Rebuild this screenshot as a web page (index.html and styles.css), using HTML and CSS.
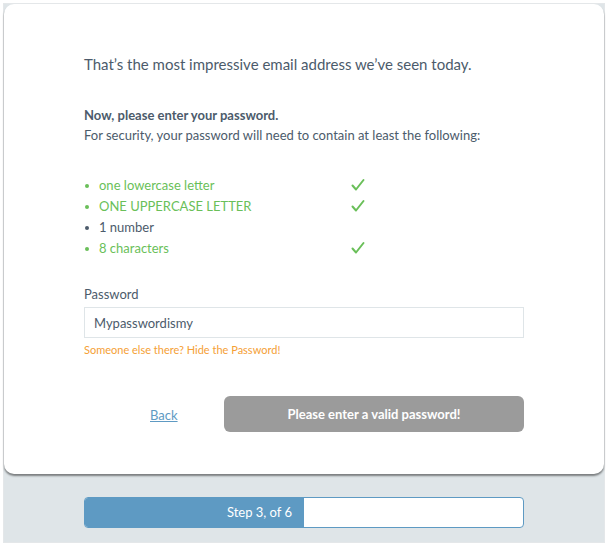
FILE: index.html
```html
<!DOCTYPE html>
<html lang="en">
<head>
<meta charset="utf-8">
<title>Password</title>
<link rel="stylesheet" href="styles.css">
</head>
<body>
<div class="frame">
  <div class="card">
    <h1 class="title">That’s the most impressive email address we’ve seen today.</h1>
    <p class="intro"><strong>Now, please enter your password.</strong><br>For security, your password will need to contain at least the following:</p>
    <ul class="rules">
      <li class="rule ok"><span class="rule-text">one lowercase letter</span><svg class="check" viewBox="0 0 14 14" width="14" height="14"><path d="M1.5 7.5 L5 11.5 L12.5 2" fill="none" stroke="#6abf59" stroke-width="2" stroke-linecap="round" stroke-linejoin="round"/></svg></li>
      <li class="rule ok"><span class="rule-text">ONE UPPERCASE LETTER</span><svg class="check" viewBox="0 0 14 14" width="14" height="14"><path d="M1.5 7.5 L5 11.5 L12.5 2" fill="none" stroke="#6abf59" stroke-width="2" stroke-linecap="round" stroke-linejoin="round"/></svg></li>
      <li class="rule"><span class="rule-text">1 number</span></li>
      <li class="rule ok"><span class="rule-text">8 characters</span><svg class="check" viewBox="0 0 14 14" width="14" height="14"><path d="M1.5 7.5 L5 11.5 L12.5 2" fill="none" stroke="#6abf59" stroke-width="2" stroke-linecap="round" stroke-linejoin="round"/></svg></li>
    </ul>
    <label class="label" for="pw">Password</label>
    <input class="input" id="pw" type="text" value="Mypasswordismy">
    <p class="hint">Someone else there? Hide the Password!</p>
    <div class="actions">
      <a class="back" href="#">Back</a>
      <button class="submit" type="button">Please enter a valid password!</button>
    </div>
  </div>
  <div class="footer">
    <div class="progress">
      <div class="progress-fill" style="width:50%">Step 3, of 6</div>
    </div>
  </div>
</div>
</body>
</html>
```
FILE: styles.css
```css
html, body {
  margin: 0;
  padding: 0;
  background: #ffffff;
}
body {
  font-family: Lato, "Open Sans", Arial, sans-serif;
  color: #4c5b6b;
}
.frame {
  margin: 3px;
  width: 600px;
  border: 1px solid #e4e7e9;
  background: #dfe5e8;
}
.card {
  background: #ffffff;
  border-radius: 10px;
  box-shadow: 0 2px 2px rgba(0, 0, 0, 0.45);
  padding: 50px 80px 42px 80px;
}
.title {
  margin: 0;
  font-size: 15px;
  line-height: 20px;
  font-weight: 400;
  color: #4c5b6b;
}
.intro {
  margin: 31px 0 0 0;
  font-size: 13px;
  line-height: 20px;
}
.intro strong {
  font-weight: 700;
}
.rules {
  list-style: none;
  margin: 30px 0 0 0;
  padding: 0;
}
.rule {
  display: flex;
  align-items: center;
  font-size: 13px;
  line-height: 21px;
  height: 21px;
}
.rule::before {
  content: "";
  width: 4px;
  height: 4px;
  border-radius: 50%;
  background: #4c5b6b;
  margin: 0 10px 0 1px;
  flex: none;
}
.rule.ok {
  color: #6abf59;
}
.rule.ok::before {
  background: #6abf59;
}
.rule-text {
  width: 252px;
}
.check {
  display: block;
  margin-top: -1px;
}
.label {
  display: block;
  margin-top: 26px;
  font-size: 13px;
  line-height: 18px;
}
.input {
  display: block;
  box-sizing: border-box;
  margin-top: 4px;
  width: 440px;
  height: 31px;
  border: 1px solid #dfe5e8;
  border-radius: 0;
  padding: 0 9px;
  font-family: Lato, "Open Sans", Arial, sans-serif;
  font-size: 13px;
  color: #4c5b6b;
  outline: none;
}
.hint {
  margin: 5px 0 0 0;
  font-size: 11px;
  line-height: 14px;
  color: #f5a035;
}
.actions {
  display: flex;
  align-items: center;
  margin-top: 39px;
}
.back {
  margin-left: 66px;
  margin-top: 2px;
  font-size: 13px;
  color: #5e9ac3;
  text-decoration: underline;
}
.submit {
  margin-left: auto;
  width: 300px;
  height: 36px;
  border: none;
  border-radius: 6px;
  background: #9b9b9b;
  color: #ffffff;
  font-family: Lato, "Open Sans", Arial, sans-serif;
  font-size: 13px;
  font-weight: 700;
}
.footer {
  padding: 23px 80px 14px 80px;
}
.progress {
  box-sizing: border-box;
  height: 31px;
  border: 1px solid #5e9ac3;
  border-radius: 4px;
  background: #ffffff;
  overflow: hidden;
}
.progress-fill {
  height: 100%;
  background: #5e9ac3;
  color: #ffffff;
  font-size: 13px;
  line-height: 29px;
  text-align: right;
  padding-right: 12px;
  box-sizing: border-box;
}
```
